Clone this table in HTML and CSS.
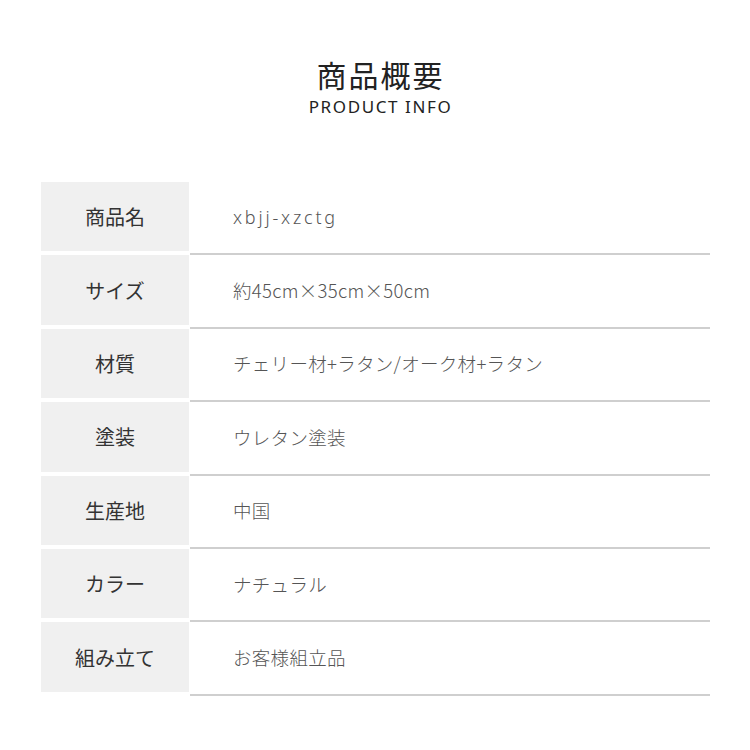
FILE: index.html
```html
<!DOCTYPE html>
<html lang="ja">
<head>
<meta charset="utf-8">
<link rel="stylesheet" href="styles.css">
</head>
<body>
<div class="page">
  <header class="heading">
    <h1 class="title">商品概要</h1>
    <p class="subtitle">PRODUCT INFO</p>
  </header>
  <div class="spec">
    <div class="row"><div class="label">商品名</div><div class="value code">xbjj-xzctg</div></div>
    <div class="row"><div class="label">サイズ</div><div class="value">約45cm×35cm×50cm</div></div>
    <div class="row"><div class="label">材質</div><div class="value">チェリー材+ラタン/オーク材+ラタン</div></div>
    <div class="row"><div class="label">塗装</div><div class="value">ウレタン塗装</div></div>
    <div class="row"><div class="label">生産地</div><div class="value">中国</div></div>
    <div class="row"><div class="label">カラー</div><div class="value">ナチュラル</div></div>
    <div class="row"><div class="label">組み立て</div><div class="value">お客様組立品</div></div>
  </div>
</div>
</body>
</html>
```
FILE: styles.css
```css
html, body {
  margin: 0;
  padding: 0;
  background: #fff;
}
body {
  font-family: "Noto Sans CJK JP", "Noto Sans", sans-serif;
  color: #333;
}
.page {
  width: 750px;
  height: 750px;
  box-sizing: border-box;
  padding: 56px 40px 0 41px;
}
.heading {
  text-align: center;
  padding-left: 10px;
}
.title {
  margin: 0;
  font-size: 30px;
  line-height: 36px;
  font-weight: 400;
  color: #222;
  letter-spacing: 2px;
}
.subtitle {
  margin: 4px 0 0;
  font-family: "Noto Sans", sans-serif;
  font-size: 17px;
  line-height: 22px;
  letter-spacing: 1.6px;
  color: #222;
}
.spec {
  margin-top: 64px;
  display: flex;
  flex-direction: column;
}
.row {
  display: grid;
  grid-template-columns: 148px 1fr;
  column-gap: 1px;
  height: 73.4px;
}
.label {
  background: #f0f0f0;
  height: 69.4px;
  display: flex;
  align-items: center;
  justify-content: center;
  font-size: 20px;
  font-weight: 400;
  color: #333;
}
.value {
  border-bottom: 2px solid #cfcfcf;
  display: flex;
  align-items: center;
  padding-left: 43px;
  padding-bottom: 2px;
  box-sizing: border-box;
  height: 73.4px;
  font-size: 18.5px;
  letter-spacing: 0.3px;
  font-weight: 300;
  color: #555;
}
.code {
  font-family: "Noto Sans", sans-serif;
  font-size: 18px;
  letter-spacing: 2.8px;
}
```
